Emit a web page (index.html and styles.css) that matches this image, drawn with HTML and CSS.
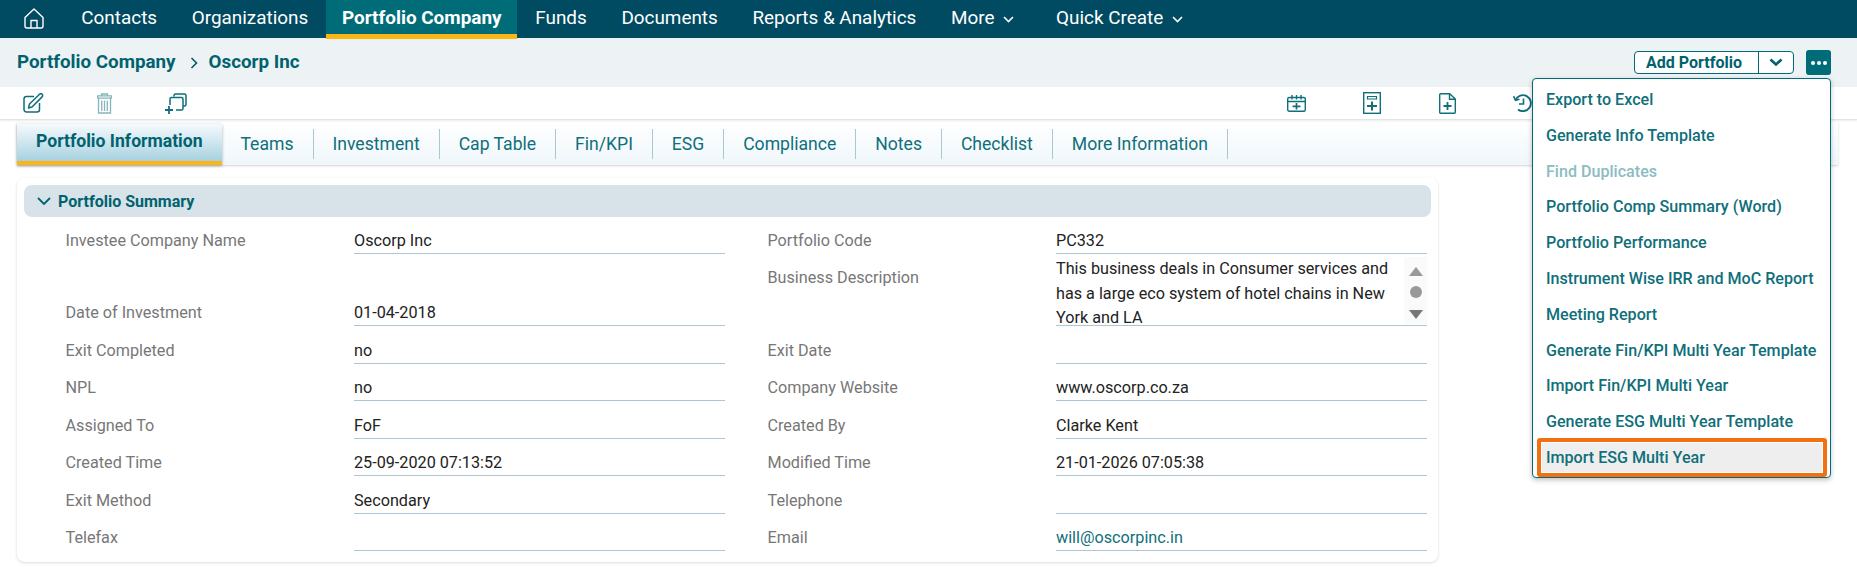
FILE: index.html
```html
<!DOCTYPE html>
<html lang="en">
<head>
    <meta charset="UTF-8">
    <title>Portfolio Company - Oscorp Inc</title>
    <link rel="stylesheet" href="styles.css">
</head>

<body>

    <!-- Main navigation -->
    <nav class="main-nav">
        <a class="nav-home">
            <svg width="20" height="21" viewBox="0 0 20 21" fill="none" stroke="#fff" stroke-width="1.4">
                <path d="M10 1 1 9.5V18a2 2 0 0 0 2 2h14a2 2 0 0 0 2-2V9.5z" stroke-linejoin="round"/>
                <path d="M7 20v-7.500h6V20"/>
            </svg>
        </a>
        <a class="nav-item">Contacts</a>
        <a class="nav-item">Organizations</a>
        <a class="nav-item active">Portfolio Company</a>
        <a class="nav-item">Funds</a>
        <a class="nav-item">Documents</a>
        <a class="nav-item">Reports &amp; Analytics</a>
        <a class="nav-item">More
            <svg class="nav-caret" width="11" height="7" viewBox="0 0 11 7" fill="none" stroke="#fff" stroke-width="1.600"><path d="M1 1l4.500 4.500L10 1"/></svg>
        </a>
        <a class="nav-item">Quick Create
            <svg class="nav-caret" width="11" height="7" viewBox="0 0 11 7" fill="none" stroke="#fff" stroke-width="1.600"><path d="M1 1l4.500 4.500L10 1"/></svg>
        </a>
    </nav>

    <!-- Breadcrumb and page actions -->
    <header class="page-head">
        <div class="crumbs">
            <span>Portfolio Company</span>
            <svg class="crumb-sep" width="8" height="12" viewBox="0 0 8 12" fill="none" stroke="#005a68" stroke-width="1.600"><path d="M1.500 1l5 5-5 5"/></svg>
            <span>Oscorp Inc</span>
        </div>
        <div class="head-actions">
            <div class="split-btn">
                <span class="split-label">Add Portfolio</span>
                <span class="split-caret">
                    <svg width="14" height="9" viewBox="0 0 14 9" fill="none" stroke="#00626f" stroke-width="2.600"><path d="M1.500 1.500l5.500 5 5.500-5"/></svg>
                </span>
            </div>
            <div class="more-btn"><i></i><i></i><i></i></div>
        </div>
    </header>

    <!-- Record toolbar -->
    <div class="toolbar">
        <div class="tool-group">
            <svg width="21" height="20" viewBox="0 0 21 20" fill="none" stroke="#0f6f7a" stroke-width="1.500">
                <path d="M11 3.500H3.500a2.500 2.500 0 0 0-2.500 2.500v10.500A2.500 2.500 0 0 0 3.500 19H14a2.500 2.500 0 0 0 2.500-2.500V10"/>
                <path d="M5.500 15l1-4L16.500 1.300a1.800 1.800 0 0 1 2.600 2.600L9 14z" stroke-linejoin="round"/>
            </svg>
            <svg class="tool-off" width="15" height="21" viewBox="0 0 15 21" fill="none" stroke="#0f6f7a" stroke-width="1.300">
                <path d="M4.500 2.500V1h6v1.500M.7 2.800h13.600v2.400H.7zM1.500 5.200V20h12V5.200M4.700 7.500v10.500M7.500 7.500v10.500M10.300 7.500v10.500"/>
            </svg>
            <svg width="22" height="21" viewBox="0 0 22 21" fill="none" stroke="#0f6f7a" stroke-width="1.500">
                <path d="M9 3.500V2.500A1.500 1.500 0 0 1 10.500 1h9A1.500 1.500 0 0 1 21 2.500v9a1.500 1.500 0 0 1-1.500 1.500H18"/>
                <path d="M5 12V6a1.500 1.500 0 0 1 1.500-1.500h10A1.500 1.500 0 0 1 18 6v9.500a1.500 1.500 0 0 1-1.500 1.500H11"/>
                <path d="M0 17h8M4 13v8" stroke-width="1.800"/>
            </svg>
        </div>
        <div class="tool-group tool-group-right">
            <svg width="19" height="17" viewBox="0 0 19 17" fill="none" stroke="#0f6f7a" stroke-width="1.400">
                <rect x=".7" y="2.500" width="17.600" height="13.800" rx="1.500"/>
                <path d="M.7 6.500h17.600M5 0v4.500M9.500 0v4.500M14 0v4.500"/>
                <path d="M5.500 11.300h8M9.500 8v6.500" stroke-width="1.700"/>
            </svg>
            <svg width="18" height="22" viewBox="0 0 18 22" fill="none" stroke="#0f6f7a" stroke-width="1.400">
                <rect x=".7" y=".7" width="16.600" height="20.600"/>
                <path d="M4.500 4.500h9v2.500h-9z" stroke-width="1.200"/>
                <path d="M4 14h10M9 9.500v9" stroke-width="2"/>
            </svg>
            <svg width="17" height="21" viewBox="0 0 17 21" fill="none" stroke="#0f6f7a" stroke-width="1.400">
                <path d="M1.700.7h9L16.300 6v13.300a1 1 0 0 1-1 1H1.700a1 1 0 0 1-1-1V1.700a1 1 0 0 1 1-1zM10.500.7V6.200h5.800"/>
                <path d="M4.500 13h8M8.500 9v8" stroke-width="1.800"/>
            </svg>
            <svg width="19" height="18" viewBox="0 0 19 18" fill="none" stroke="#0f6f7a" stroke-width="1.900">
                <path d="M2.500 6A8 8 0 1 1 5 15.500"/>
                <path d="M.5 2.200l2 4 4-1" stroke-width="1.600"/>
                <path d="M10.500 4.500V10H6" stroke-width="1.600"/>
            </svg>
        </div>
    </div>

    <!-- Record tabs -->
    <div class="tabs">
        <a class="tab active">Portfolio Information</a>
        <a class="tab">Teams</a>
        <a class="tab">Investment</a>
        <a class="tab">Cap Table</a>
        <a class="tab">Fin/KPI</a>
        <a class="tab">ESG</a>
        <a class="tab">Compliance</a>
        <a class="tab">Notes</a>
        <a class="tab">Checklist</a>
        <a class="tab">More Information</a>
    </div>

    <!-- Summary card -->
    <section class="card">
        <div class="section-head">
            <svg width="14" height="9" viewBox="0 0 14 9" fill="none" stroke="#00626f" stroke-width="1.800"><path d="M1 1l6 6 6-6"/></svg>
            <span>Portfolio Summary</span>
        </div>
        <div class="fields">
            <div class="field"><span class="label">Investee Company Name</span><span class="value">Oscorp Inc</span></div>
            <div class="field"><span class="label">Portfolio Code</span><span class="value">PC332</span></div>

            <div class="field"><span class="label">Date of Investment</span><span class="value">01-04-2018</span></div>
            <div class="field field-tall">
                <span class="label">Business Description</span>
                <div class="value value-text">
                    <p>This business deals in Consumer services and has a large eco system of hotel chains in New York and LA</p>
                    <div class="scroller"><i class="up"></i><i class="thumb"></i><i class="down"></i></div>
                </div>
            </div>

            <div class="field"><span class="label">Exit Completed</span><span class="value">no</span></div>
            <div class="field"><span class="label">Exit Date</span><span class="value"></span></div>

            <div class="field"><span class="label">NPL</span><span class="value">no</span></div>
            <div class="field"><span class="label">Company Website</span><span class="value">www.oscorp.co.za</span></div>

            <div class="field"><span class="label">Assigned To</span><span class="value">FoF</span></div>
            <div class="field"><span class="label">Created By</span><span class="value">Clarke Kent</span></div>

            <div class="field"><span class="label">Created Time</span><span class="value">25-09-2020 07:13:52</span></div>
            <div class="field"><span class="label">Modified Time</span><span class="value">21-01-2026 07:05:38</span></div>

            <div class="field"><span class="label">Exit Method</span><span class="value">Secondary</span></div>
            <div class="field"><span class="label">Telephone</span><span class="value"></span></div>

            <div class="field"><span class="label">Telefax</span><span class="value"></span></div>
            <div class="field"><span class="label">Email</span><span class="value value-link">will@oscorpinc.in</span></div>
        </div>
    </section>

    <!-- Dropdown of the more button -->
    <ul class="menu">
        <li>Export to Excel</li>
        <li>Generate Info Template</li>
        <li class="disabled">Find Duplicates</li>
        <li>Portfolio Comp Summary (Word)</li>
        <li>Portfolio Performance</li>
        <li>Instrument Wise IRR and MoC Report</li>
        <li>Meeting Report</li>
        <li>Generate Fin/KPI Multi Year Template</li>
        <li>Import Fin/KPI Multi Year</li>
        <li>Generate ESG Multi Year Template</li>
        <li class="marked">Import ESG Multi Year</li>
    </ul>

</body>
</html>
```

FILE: styles.css
```css
/* Global Styles */
* {
    margin: 0;
    padding: 0;
    box-sizing: border-box;
}

body {
    font-family: 'Roboto', sans-serif;
    font-size: 16.2px;
    background-color: #fff;
    color: #222;
    position: relative;
    overflow: hidden;
    height: 567px;
}

/* Main navigation */
.main-nav {
    display: flex;
    height: 38px;
    background: #004a62;
    color: #fff;
    font-size: 18.9px;
}

.nav-home {
    width: 64px;
    padding: 8px 0 0 24px;
}

.nav-item {
    display: flex;
    align-items: center;
    height: 38px;
    padding: 0 17.3px 3px;
}

.nav-item.active {
    height: 39px;
    padding: 0 16px;
    margin: 0 .5px;
    background: #006c78;
    border-bottom: 5px solid #fdb515;
    font-weight: 700;
    position: relative;
}

.nav-caret {
    margin-left: 9px;
    margin-top: 4px;
}

.nav-item:last-child {
    margin-left: 7px;
}

/* Breadcrumb and page actions */
.page-head {
    display: flex;
    justify-content: space-between;
    align-items: center;
    height: 49px;
    padding: 0 26px 0 17px;
    background: #edf2f5;
}

.crumbs {
    display: flex;
    align-items: center;
    margin-bottom: 2px;
    font-size: 18.8px;
    font-weight: 700;
    color: #00626f;
}

.crumb-sep {
    margin: 3px 11px 0 14px;
}

.head-actions {
    display: flex;
    align-items: center;
    gap: 12px;
}

.split-btn {
    display: flex;
    align-items: center;
    width: 160px;
    height: 23px;
    background: #fff;
    border: 1px solid #006c78;
    border-radius: 4px;
    color: #00626f;
    font-size: 16px;
    font-weight: 700;
}

.split-label {
    width: 123px;
    padding-left: 11px;
    line-height: 21px;
}

.split-caret {
    flex: 1;
    display: flex;
    justify-content: center;
    align-items: center;
    height: 21px;
    border-left: 1px solid #006c78;
}

.more-btn {
    display: flex;
    justify-content: center;
    align-items: center;
    gap: 2px;
    width: 25px;
    height: 25px;
    background: #006c78;
    border-radius: 3px;
}

.more-btn i {
    width: 4px;
    height: 4px;
    border-radius: 50%;
    background: #fff;
}

/* Record toolbar */
.toolbar {
    display: flex;
    justify-content: space-between;
    align-items: center;
    height: 33px;
    padding: 0 325px 0 23px;
    border-bottom: 1px solid #e2e4e5;
    box-shadow: 0 1px 2px rgba(0, 0, 0, 0.08);
}

.tool-group {
    display: flex;
    align-items: center;
    gap: 53px;
}

.tool-group-right {
    gap: 57.5px;
}

.tool-off {
    opacity: 0.5;
}

/* Record tabs */
.tabs {
    display: flex;
    align-items: flex-end;
    height: 43px;
    margin: 2px 19px 0 17px;
    background: linear-gradient(#fff, #eff7fb);
    box-shadow: 0 1px 2px rgba(0, 0, 0, 0.18);
    font-size: 17.6px;
    color: #0f6f7a;
}

.tab {
    display: flex;
    align-items: center;
    height: 30px;
    margin-bottom: 6px;
    padding: 0 19px 0 19.5px;
    border-right: 1px solid #aec6d1;
}

.tab.active {
    height: 41px;
    margin-bottom: 0;
    padding: 0 19px 3px 19px;
    border-right: none;
    border-bottom: 4px solid #fdb515;
    background: linear-gradient(#f5fafc, #a7d1e0);
    color: #00626f;
    font-weight: 700;
    box-shadow: 0 1px 3px rgba(0, 0, 0, 0.3);
}

.tab + .tab {
    padding-left: 18.9px;
}

/* Summary card */
.card {
    width: 1421px;
    height: 384px;
    margin: 13px 0 0 17px;
    padding: 7px;
    border-radius: 8px;
    box-shadow: 0 1px 3px rgba(0, 0, 0, 0.15);
}

.section-head {
    display: flex;
    align-items: center;
    gap: 7px;
    height: 32px;
    padding-left: 13px;
    background: #d7e3e8;
    border-radius: 8px;
    color: #00626f;
    font-size: 16px;
    font-weight: 700;
}

.fields {
    display: grid;
    grid-template-columns: 659.5px 659.5px;
    grid-template-rows: 37px 72px repeat(6, 37.5px);
    column-gap: 42.5px;
    padding-left: 41.5px;
}

.field {
    display: flex;
    align-items: flex-end;
}

.label {
    width: 288.5px;
    line-height: 26px;
    color: #777;
}

.value {
    width: 371px;
    height: 100%;
    display: flex;
    align-items: flex-end;
    line-height: 25px;
    border-bottom: 1px solid #aec6d1;
}

.value-link {
    color: #0f6f7a;
}

.field-tall {
    align-items: flex-start;
}

.field-tall .label {
    margin-top: 11px;
}

.value-text {
    align-items: stretch;
    justify-content: space-between;
    overflow: hidden;
    padding-top: 3px;
}

.value-text p {
    width: 340px;
    line-height: 24.5px;
}

.scroller {
    display: flex;
    flex-direction: column;
    align-items: center;
    width: 23px;
    height: 67px;
    padding-top: 10px;
    background: #fafafa;
}

.scroller .up {
    border: 7px solid transparent;
    border-top: none;
    border-bottom: 9px solid #999;
}

.scroller .thumb {
    width: 12px;
    height: 12px;
    margin: 10px 0 12px;
    border-radius: 50%;
    background: #999;
}

.scroller .down {
    border: 7px solid transparent;
    border-bottom: none;
    border-top: 9px solid #777;
}

/* Dropdown of the more button */
.menu {
    position: absolute;
    top: 78px;
    left: 1532px;
    width: 299px;
    height: 400px;
    padding-top: 2px;
    list-style: none;
    background: #fff;
    border: 1px solid #006c78;
    border-radius: 4px;
    box-shadow: 0 2px 5px rgba(0, 0, 0, 0.25);
    color: #0f6f7a;
    font-size: 16.1px;
    font-weight: 500;
}

.menu li {
    height: 35.8px;
    line-height: 37px;
    padding-left: 13px;
}

.menu li.disabled {
    color: #8bbcc2;
}

.menu li.marked {
    height: 39px;
    line-height: 31px;
    margin: -1px 3px 0 4px;
    padding-left: 5px;
    background: #eee;
    border: 4px solid #f26f12;
    border-radius: 3px;
    box-shadow: inset 0 0 0 1px #fff;
}
```
